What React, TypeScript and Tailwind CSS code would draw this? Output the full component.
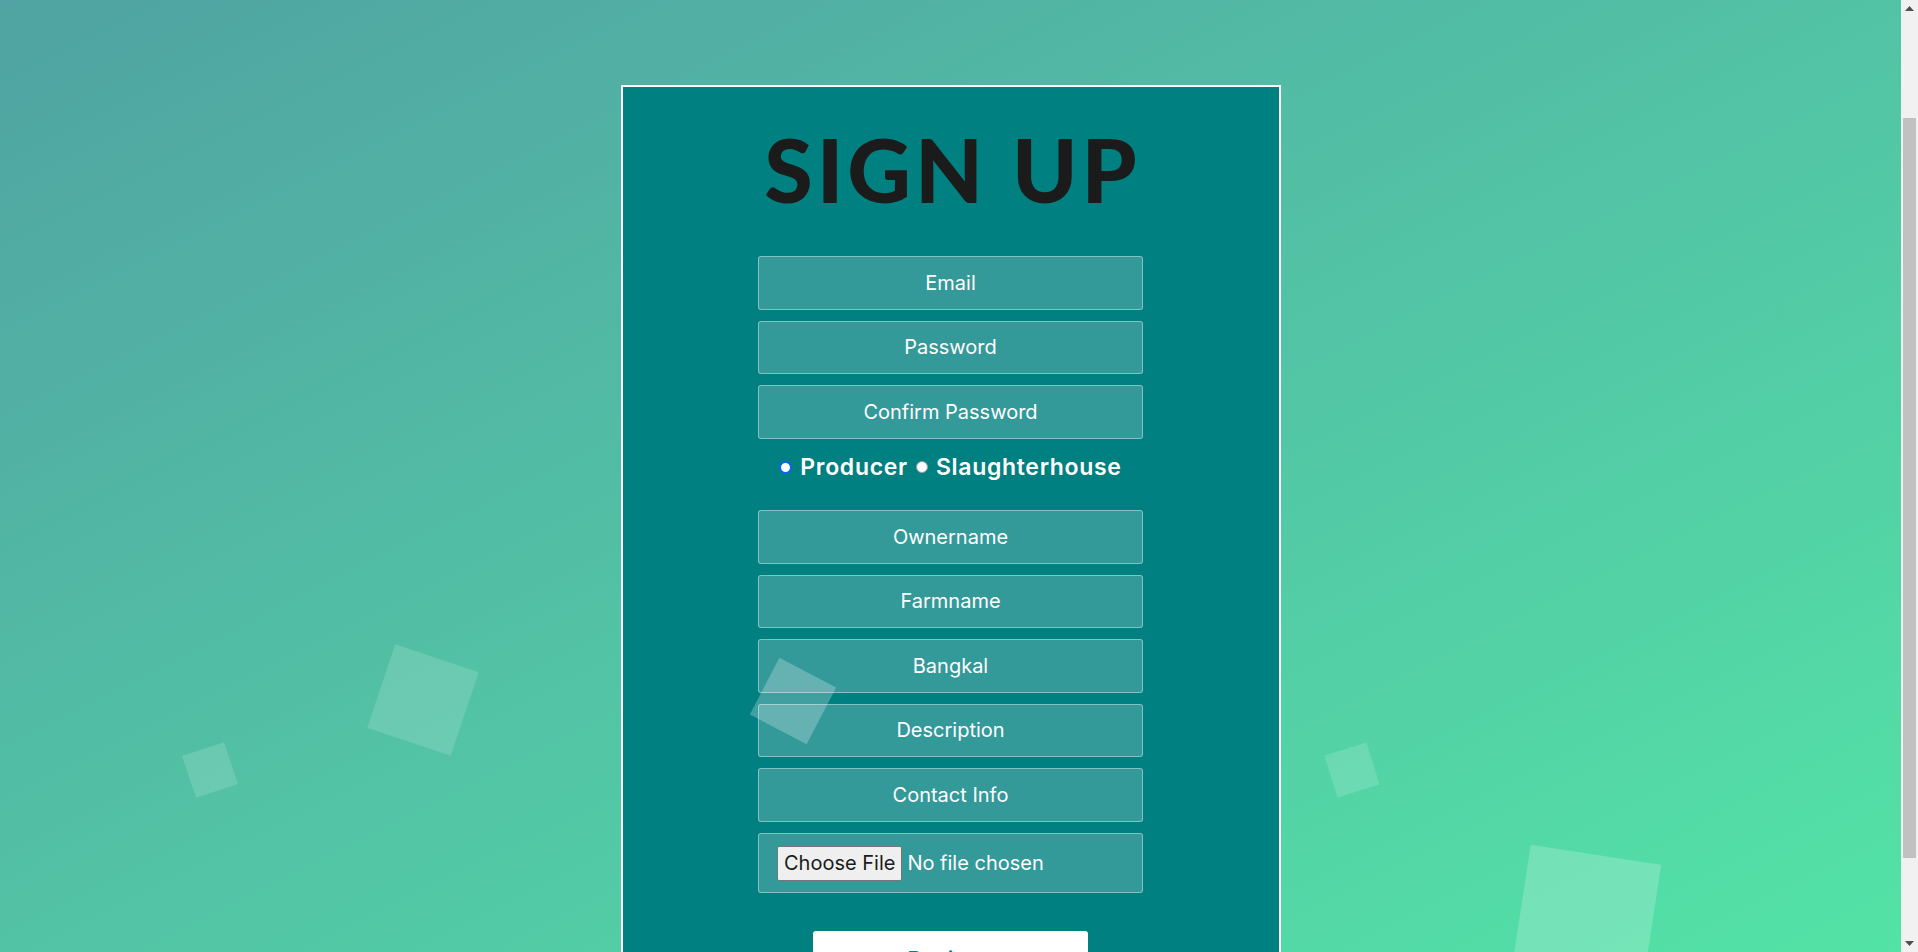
import React from "react";

const fieldCls =
  "w-full h-[53.5px] rounded-[3px] border border-white/40 bg-white/20 text-center text-white text-[20px] font-[Inter,'Noto_Sans',sans-serif] placeholder:text-white outline-none";

function FakeScrollbar() {
  return (
    <div className="fixed top-0 right-0 w-[17px] h-[952px] bg-[#f1f1f1] flex flex-col items-center">
      <div className="h-[17px] w-full flex items-center justify-center">
        <svg width="9" height="5" viewBox="0 0 9 5">
          <path d="M0 5 L4.5 0 L9 5 Z" fill="#505050" />
        </svg>
      </div>
      <div className="mt-[101px] w-[13px] h-[740px] bg-[#c1c1c1]" />
      <div className="mt-auto h-[17px] w-full flex items-center justify-center">
        <svg width="9" height="5" viewBox="0 0 9 5">
          <path d="M0 0 L9 0 L4.5 5 Z" fill="#505050" />
        </svg>
      </div>
    </div>
  );
}

export default function App() {
  const top = ["Email", "Password", "Confirm Password"];
  const bottom = ["Ownername", "Farmname", "Bangkal", "Description", "Contact Info"];
  return (
    <div className="relative min-h-[1181px] w-[1901px] font-[Inter,'Noto_Sans',sans-serif]">
      <div className="fixed top-0 left-0 bottom-0 w-[1901px] bg-linear-to-br from-[#50a3a2] to-[#53e3a6]" />

      <div className="relative pt-[85px] pb-[50px]">
        <div className="mx-auto w-[660px] border-2 border-white bg-[#008080] flex flex-col items-center pt-[38px] pb-[142px]">
          <h1 className="text-[88px] leading-none font-black tracking-[0.045em] pl-[0.045em] text-[#1b1b1b] font-[Lato,Inter,sans-serif]">
            SIGN UP
          </h1>

          <form className="mt-[43px] w-[385px] flex flex-col" onSubmit={(e) => e.preventDefault()}>
            {top.map((p, i) => (
              <input
                key={p}
                type={p.includes("Password") ? "password" : "text"}
                placeholder={p}
                className={`${fieldCls} ${i > 0 ? "mt-[11px]" : ""}`}
              />
            ))}

            <div className="mt-[13.5px] h-[30px] flex items-center justify-center text-white text-[23px] font-semibold tracking-[0.03em]">
              <span className="w-[13px] h-[13px] rounded-full border-[2.5px] border-[#0b64f4] bg-white shrink-0" />
              <span className="ml-[8px]">Producer</span>
              <span className="ml-[8px] w-[12px] h-[12px] rounded-full border border-[#9a9a9a] bg-white shrink-0" />
              <span className="ml-[8px]">Slaughterhouse</span>
            </div>

            {bottom.map((p, i) => (
              <input
                key={p}
                type="text"
                placeholder={p}
                className={`${fieldCls} ${i === 0 ? "mt-[28px]" : "mt-[11px]"}`}
              />
            ))}

            <div className="mt-[11.5px] h-[60px] rounded-[3px] border border-white/40 bg-white/20 flex items-center pl-[18px]">
              <span className="h-[35px] px-[6px] flex items-center rounded-[2px] border border-[#767676] bg-[#efefef] text-[20px] text-[#1b1b1b]">
                Choose File
              </span>
              <span className="ml-[5px] text-[20px] text-white">No file chosen</span>
            </div>

            <div className="mt-[38px] flex justify-center">
              <button
                type="submit"
                className="w-[275px] h-[56px] rounded-[3px] bg-white text-[#008080] text-[22px] font-medium"
              >
                Register
              </button>
            </div>
          </form>
        </div>
      </div>

      <div className="fixed top-0 left-0 bottom-0 w-[1901px] pointer-events-none overflow-hidden">
        <div className="absolute left-[379px] top-[656px] w-[88px] h-[88px] rotate-[18.6deg] bg-white/15" />
        <div className="absolute left-[188px] top-[748px] w-[44px] h-[44px] rotate-[-18.4deg] bg-white/15" />
        <div className="absolute left-[761px] top-[669px] w-[64px] h-[64px] rotate-[27.5deg] bg-white/25" />
        <div className="absolute left-[1330px] top-[748px] w-[44px] h-[44px] rotate-[-17.2deg] bg-white/15" />
        <div className="absolute left-[1520px] top-[854px] w-[132px] h-[132px] rotate-[8.7deg] bg-white/20" />
      </div>

      <FakeScrollbar />
    </div>
  );
}
